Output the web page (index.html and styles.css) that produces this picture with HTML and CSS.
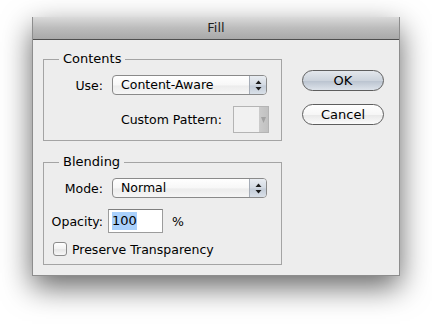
FILE: index.html
```html
<!DOCTYPE html>
<html lang="en">
<head>
    <meta charset="UTF-8">
    <title>Fill</title>
    <link rel="stylesheet" href="styles.css">
</head>
<body>

    <div class="dialog">
        <div class="titlebar">Fill</div>
        <div class="dialog-body">
            <div class="groups">
                <fieldset class="group">
                    <legend>Contents</legend>
                    <div class="row">
                        <span class="row-label">Use:</span>
                        <div class="popup">
                            <span class="popup-text">Content-Aware</span>
                            <span class="popup-arrows">
                                <svg width="7" height="11" viewBox="0 0 7 11">
                                    <path d="M3.5 0.5 L6.5 4 L0.5 4 Z" fill="#1c1c1c"/>
                                    <path d="M3.5 10.5 L6.5 7 L0.5 7 Z" fill="#1c1c1c"/>
                                </svg>
                            </span>
                        </div>
                    </div>
                    <div class="row row-pattern">
                        <span>Custom Pattern:</span>
                        <div class="pattern-picker">
                            <span class="pattern-swatch"></span>
                            <span class="pattern-arrow">
                                <svg width="5" height="6" viewBox="0 0 5 6">
                                    <path d="M0 0 L5 0 L2.5 6 Z" fill="#a2a2a2"/>
                                </svg>
                            </span>
                        </div>
                    </div>
                </fieldset>

                <fieldset class="group">
                    <legend>Blending</legend>
                    <div class="row">
                        <span class="row-label">Mode:</span>
                        <div class="popup">
                            <span class="popup-text">Normal</span>
                            <span class="popup-arrows">
                                <svg width="7" height="11" viewBox="0 0 7 11">
                                    <path d="M3.5 0.5 L6.5 4 L0.5 4 Z" fill="#1c1c1c"/>
                                    <path d="M3.5 10.5 L6.5 7 L0.5 7 Z" fill="#1c1c1c"/>
                                </svg>
                            </span>
                        </div>
                    </div>
                    <div class="row row-opacity">
                        <span class="row-label">Opacity:</span>
                        <div class="text-field"><span class="selected">100</span></div>
                        <span class="unit">%</span>
                    </div>
                    <div class="row row-check">
                        <span class="checkbox"></span>
                        <span>Preserve Transparency</span>
                    </div>
                </fieldset>
            </div>

            <div class="buttons">
                <button class="btn btn-default">OK</button>
                <button class="btn">Cancel</button>
            </div>
        </div>
    </div>

</body>
</html>
```

FILE: styles.css
```css
html {
    background: #ffffff;
}
body {
    margin: 0;
    min-height: 100vh;
    box-sizing: border-box;
    padding: 17px 0 0 32px;
    font-family: "DejaVu Sans", "Liberation Sans", sans-serif;
    font-size: 12.5px;
    color: #000;
}
.dialog {
    width: 368px;
    box-sizing: border-box;
    background: #ededed;
    border: 1px solid #8d8d8d;
    border-top: none;
    box-shadow: 0 11px 28px rgba(0, 0, 0, 0.6);
}
.titlebar {
    height: 22px;
    line-height: 22px;
    text-align: center;
    font-size: 13px;
    color: #1e1e1e;
    background: linear-gradient(#dadada, #bcbcbc 50%, #a9a9a9);
    border-bottom: 1px solid #4e4e4e;
}
.dialog-body {
    display: flex;
    justify-content: space-between;
    padding: 11px 15px 10px 10px;
}
.groups {
    display: flex;
    flex-direction: column;
    gap: 13px;
}
.group {
    width: 239px;
    box-sizing: border-box;
    margin: 0;
    padding: 8px 13px 7px 0;
    border: 1px solid #a4a4a4;
    min-width: 0;
    display: flex;
    flex-direction: column;
    gap: 11px;
}
.group legend {
    margin-left: 15px;
    padding: 0 4px;
    line-height: 16px;
    font-size: 13px;
}
.row {
    display: flex;
    align-items: center;
    gap: 9px;
}
.row-label {
    width: 59px;
    text-align: right;
    flex-shrink: 0;
}
.popup {
    width: 155px;
    height: 20px;
    box-sizing: border-box;
    display: flex;
    border: 1px solid #8a8a8a;
    border-radius: 4px;
    background: linear-gradient(#ffffff, #f7f7f7 50%, #ececec 55%, #f6f6f6);
    overflow: hidden;
}
.popup-text {
    flex: 1;
    padding-left: 8px;
    line-height: 18px;
}
.popup-arrows {
    width: 16px;
    display: flex;
    align-items: center;
    justify-content: center;
    border-left: 1px solid #a6adb7;
    background: linear-gradient(#e9edf2, #d3dae3 50%, #c3ccd8 55%, #d9e0e8);
}
.row-pattern {
    justify-content: flex-end;
    gap: 11px;
    margin-right: -1px;
}
.pattern-picker {
    width: 36px;
    height: 27px;
    box-sizing: border-box;
    display: flex;
    border: 1px solid #b4b4b4;
    background: #f1f1f1;
}
.pattern-swatch {
    flex: 1;
}
.pattern-arrow {
    width: 9px;
    display: flex;
    align-items: center;
    justify-content: center;
    background: linear-gradient(90deg, #cbcbcb, #c1c1c1);
}
.row-opacity {
    gap: 5px;
    height: 24px;
}
.text-field {
    width: 55px;
    height: 24px;
    box-sizing: border-box;
    border: 1px solid #9c9c9c;
    border-top-color: #7e7e7e;
    background: #fff;
    padding: 2px 0 0 3px;
    font-size: 13px;
}
.selected {
    display: inline-block;
    background: #a9d0fb;
    line-height: 18px;
}
.unit {
    margin-left: 4px;
}
.row-check {
    margin-top: -3px;
    padding-left: 9px;
    gap: 5px;
    height: 16px;
}
.checkbox {
    width: 14px;
    height: 14px;
    box-sizing: border-box;
    border: 1px solid #8c8c8c;
    border-radius: 3px;
    background: linear-gradient(#ffffff, #f1f1f1 50%, #e6e6e6 55%, #f7f7f7);
}
.buttons {
    display: flex;
    flex-direction: column;
    gap: 13px;
    padding-top: 19px;
}
.btn {
    width: 82px;
    height: 21px;
    padding: 0;
    font-family: inherit;
    font-size: 13px;
    color: #000;
    border: 1px solid #5e5e5e;
    border-radius: 11px;
    background: linear-gradient(#ffffff, #f6f6f6 50%, #e9e9e9 55%, #fbfbfb);
}
.btn-default {
    background: linear-gradient(#e3e7ec, #ccd3dc 50%, #bcc5d1 55%, #dde3ea);
}
```
